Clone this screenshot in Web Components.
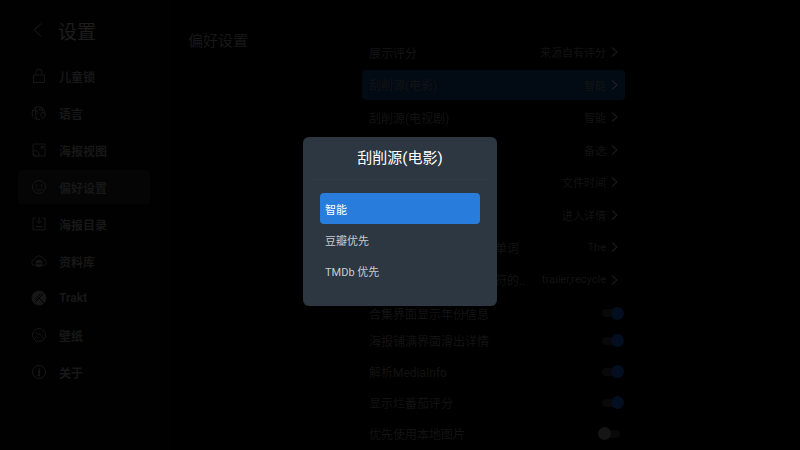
<!DOCTYPE html>
<html lang="zh-CN">
<head>
<meta charset="UTF-8">
<meta name="viewport" content="width=device-width, initial-scale=1.0">
<title>设置</title>
<style>
  body {
    margin: 0;
    background-color: #000;
    color: #171717;
    font-family: Roboto, "Noto Sans CJK SC", sans-serif;
    font-size: 12px;
  }
</style>
</head>
<body>
<settings-page>
  <settings-menu slot="menu">
    <menu-item icon="lock">儿童锁</menu-item>
    <menu-item icon="globe">语言</menu-item>
    <menu-item icon="view">海报视图</menu-item>
    <menu-item icon="smile" active>偏好设置</menu-item>
    <menu-item icon="folder">海报目录</menu-item>
    <menu-item icon="cloud">资料库</menu-item>
    <menu-item icon="trakt">Trakt</menu-item>
    <menu-item icon="wallpaper">壁纸</menu-item>
    <menu-item icon="info">关于</menu-item>
  </settings-menu>
  <span slot="title">偏好设置</span>
  <value-row slot="values" value="来源自有评分">展示评分</value-row>
  <value-row slot="values" value="智能" active>刮削源(电影)</value-row>
  <value-row slot="values" value="智能">刮削源(电视剧)</value-row>
  <value-row slot="values" value="备选"></value-row>
  <value-row slot="values" value="文件时间"></value-row>
  <value-row slot="values" value="进入详情"></value-row>
  <value-row slot="values" value="The">排序时忽略 标题开头 的单词</value-row>
  <value-row slot="values" value="trailer,recycle">忽略文件名称中 含有 字符的..</value-row>
  <switch-row slot="switches" label="合集界面显示年份信息" checked></switch-row>
  <switch-row slot="switches" label="海报铺满界面滑出详情" checked></switch-row>
  <switch-row slot="switches" label="解析MediaInfo" checked></switch-row>
  <switch-row slot="switches" label="显示烂番茄评分" checked></switch-row>
  <switch-row slot="switches" label="优先使用本地图片"></switch-row>
</settings-page>

<choice-dialog>
  <span slot="title">刮削源(电影)</span>
  <choice-option selected>智能</choice-option>
  <choice-option>豆瓣优先</choice-option>
  <choice-option>TMDb 优先</choice-option>
</choice-dialog>

<script>
// Icons of the side menu, 16x16
const ICONS = {
  lock: '<path d="M2.5 7h11v7.500h-11zM5 7V4.500a3 3.500 0 0 1 6 0V7"/>',
  globe: '<path d="M14 9A6.500 6.500 0 1 0 9 14.400M5.500 2.200c-1.500 3-1.500 8 .5 12M10 2c1 1.500 1.500 3 1.500 4.500M2 5.500h4l1 2-2 2M9.500 2.500L8 5h4"/><path d="M12 7.500a2.300 2.300 0 0 1 2.300 2.300c0 1.700-2.300 4.200-2.300 4.200s-2.300-2.500-2.300-4.200A2.300 2.300 0 0 1 12 7.500z"/>',
  view: '<path d="M2 2h12v12H2zM9.500 4.500H12V7M12 4.500L9 7.500M2 9.500l3-1.500 3 3v3M2 11l2.500 3"/>',
  smile: '<circle cx="8" cy="8" r="6.5"/><path d="M5.500 5.500v2M10.500 5.500v2M5 9.500c1.500 2.500 4.500 2.500 6 0"/>',
  folder: '<path d="M5 2H2v12h12V2h-3M8 1v6M5.500 5L8 7.500 10.500 5M4.500 10.500h7"/>',
  cloud: '<path d="M4.500 12.500H4a3 3 0 0 1-.5-6 4.600 4.600 0 0 1 9 0 3 3 0 0 1-.5 6h-.5"/><path d="M5 9c0-2 6-2 6 0v3c0 2-6 2-6 0z" fill="currentColor"/><path d="M5 10c1.500 1.200 4.500 1.200 6 0" stroke="#000"/>',
  trakt: '<circle cx="8" cy="8" r="7" fill="currentColor"/><path d="M12.500 3.500L8 8l5 5M8 8l-4 4M10 3.500L4 9.500" stroke="#000"/>',
  wallpaper: '<circle cx="8" cy="8" r="6.5"/><path d="M3.500 11.500l2-2 1.500 1.500M6.500 8l1.500-1.500L12.500 11.500"/><circle cx="5.500" cy="6" r=".5"/>',
  info: '<circle cx="8" cy="8" r="6.5"/><path d="M8.500 4v1.500M7 7h1.500L7.500 11.500H9" stroke-width="1.500"/>'
};

class SettingsPage extends HTMLElement {
  constructor() {
    super();
    this.attachShadow({ mode: "open" });
  }

  connectedCallback() {
    this.shadowRoot.innerHTML = `
      <style>
        :host {
          display: grid;
          grid-template-columns: 170px 192px minmax(0, 263fr) minmax(0, 175fr);
          height: 100vh;
          overflow: hidden;
        }
        h2 {
          margin: 0;
          padding: 30px 0 0 18px;
          font-size: 15px;
          font-weight: 400;
          line-height: 22px;
        }
        .list {
          padding-top: 36px;
        }
        .values {
          display: grid;
          grid-auto-rows: 1fr;
          height: 260px;
        }
        .switches {
          padding-top: 5px;
        }
      </style>
      <slot name="menu"></slot>
      <h2><slot name="title"></slot></h2>
      <main class="list">
        <div class="values"><slot name="values"></slot></div>
        <div class="switches"><slot name="switches"></slot></div>
      </main>
    `;
  }
}

class SettingsMenu extends HTMLElement {
  constructor() {
    super();
    this.attachShadow({ mode: "open" });
  }

  connectedCallback() {
    this.shadowRoot.innerHTML = `
      <style>
        :host {
          display: block;
          padding: 15px 20px 0 18px;
          background-color: #010101;
        }
        header {
          display: flex;
          align-items: center;
          gap: 12px;
          padding-left: 12px;
          margin-bottom: 14px;
          height: 30px;
          color: #1d1d1d;
        }
        h1 {
          margin: 0;
          font-size: 19px;
          font-weight: 400;
        }
        button {
          display: flex;
          padding: 0;
          border: none;
          background: none;
          color: inherit;
        }
        nav {
          display: flex;
          flex-direction: column;
          gap: 3px;
        }
      </style>
      <header>
        <button aria-label="返回">
          <svg width="16" height="16" viewBox="0 0 16 16" fill="none" stroke="currentColor"><path d="M11 1.500L4.500 8l6.500 6.500"/></svg>
        </button>
        <h1>设置</h1>
      </header>
      <nav><slot></slot></nav>
    `;
  }
}

class MenuItem extends HTMLElement {
  constructor() {
    super();
    this.attachShadow({ mode: "open" });
  }

  connectedCallback() {
    this.shadowRoot.innerHTML = `
      <style>
        :host {
          display: block;
        }
        a {
          display: flex;
          align-items: center;
          gap: 12px;
          height: 34px;
          padding-left: 13px;
          border-radius: 4px;
          color: #171717;
          font-weight: 700;
          text-decoration: none;
        }
        :host([active]) a {
          background-color: #050505;
        }
      </style>
      <a href="#${this.getAttribute("icon")}">
        <svg width="16" height="16" viewBox="0 0 16 16" fill="none" stroke="currentColor">${ICONS[this.getAttribute("icon")]}</svg>
        <slot></slot>
      </a>
    `;
  }
}

// Row that opens a list of choices
class ValueRow extends HTMLElement {
  constructor() {
    super();
    this.attachShadow({ mode: "open" });
  }

  connectedCallback() {
    this.shadowRoot.innerHTML = `
      <style>
        :host {
          display: flex;
          min-width: 0;
          padding: 1px 0;
        }
        button {
          display: flex;
          align-items: center;
          width: 100%;
          min-width: 0;
          padding: 0 7px;
          border: none;
          border-radius: 4px;
          background: none;
          color: #131313;
          font: inherit;
          text-align: left;
        }
        .label {
          flex: 1;
          min-width: 0;
          overflow: hidden;
          text-overflow: ellipsis;
          white-space: nowrap;
        }
        .value {
          margin: 0 4px 0 8px;
          font-size: 11px;
        }
        svg {
          color: #181818;
        }
        :host([active]) button {
          background-color: #020a14;
        }
        :host([active]) svg {
          color: #1e1e20;
        }
      </style>
      <button>
        <span class="label"><slot></slot></span>
        <span class="value">${this.getAttribute("value")}</span>
        <svg width="8" height="12" viewBox="0 0 8 12" fill="none" stroke="currentColor" stroke-width="1.3"><path d="M2 1.500L7 6 2 10.500"/></svg>
      </button>
    `;
  }
}

class SwitchRow extends HTMLElement {
  constructor() {
    super();
    this.attachShadow({ mode: "open" });
  }

  connectedCallback() {
    this.shadowRoot.innerHTML = `
      <style>
        :host {
          display: block;
          color: #131313;
        }
        label {
          display: flex;
          align-items: center;
          justify-content: space-between;
          height: 31px;
          padding: 0 1px 0 7px;
        }
        /* the first row closes up to the value list */
        :host(:first-of-type) label {
          height: 24px;
        }
        input {
          appearance: none;
          display: flex;
          align-items: center;
          width: 18px;
          height: 8px;
          margin: 0 4px;
          border-radius: 4px;
          background-color: #080808;
        }
        /* the knob is wider than the end of its track */
        input::before {
          content: "";
          flex: none;
          width: 13px;
          height: 13px;
          margin: 0 -4px;
          border-radius: 50%;
          background-color: #151515;
        }
        input:checked {
          justify-content: flex-end;
        }
        input:checked::before {
          background-color: #030e20;
        }
      </style>
      <label>
        <span>${this.getAttribute("label")}</span>
        <input type="checkbox" role="switch" ${this.hasAttribute("checked") ? "checked" : ""}>
      </label>
    `;
  }
}

class ChoiceDialog extends HTMLElement {
  constructor() {
    super();
    this.attachShadow({ mode: "open" });
  }

  connectedCallback() {
    this.shadowRoot.innerHTML = `
      <style>
        :host {
          position: fixed;
          inset: 0;
          display: flex;
          align-items: center;
          justify-content: center;
        }
        section {
          box-sizing: border-box;
          width: 194px;
          padding: 9px 9px 20px;
          margin-top: -7px;
          border-radius: 6px;
          background-color: #2c3742;
          color: #fff;
        }
        h2 {
          margin: 0 0 13px;
          padding-bottom: 9px;
          border-bottom: 1px solid #303a44;
          font-size: 15px;
          font-weight: 400;
          line-height: 24px;
          text-align: center;
        }
        .options {
          padding: 0 8px;
        }
      </style>
      <section role="dialog" aria-modal="true" aria-labelledby="title">
        <h2 id="title"><slot name="title"></slot></h2>
        <div class="options"><slot></slot></div>
      </section>
    `;
  }
}

class ChoiceOption extends HTMLElement {
  constructor() {
    super();
    this.attachShadow({ mode: "open" });
  }

  connectedCallback() {
    this.shadowRoot.innerHTML = `
      <style>
        :host {
          display: block;
        }
        button {
          display: block;
          width: 100%;
          height: 31px;
          padding: 0 5px;
          border: none;
          border-radius: 4px;
          background: none;
          color: #c8ccd0;
          font: inherit;
          font-size: 11px;
          text-align: left;
        }
        :host([selected]) button {
          background-color: #287cdc;
          color: #fff;
        }
      </style>
      <button><slot></slot></button>
    `;
  }
}

customElements.define("settings-page", SettingsPage);
customElements.define("settings-menu", SettingsMenu);
customElements.define("menu-item", MenuItem);
customElements.define("value-row", ValueRow);
customElements.define("switch-row", SwitchRow);
customElements.define("choice-dialog", ChoiceDialog);
customElements.define("choice-option", ChoiceOption);
</script>
</body>
</html>
